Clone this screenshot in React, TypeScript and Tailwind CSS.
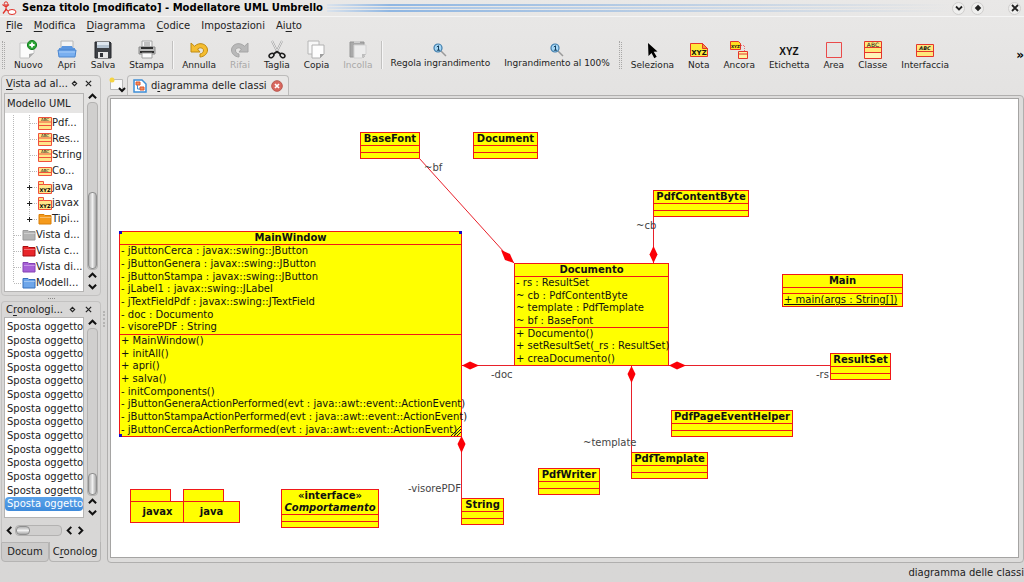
import { useState } from 'react';
import type { ReactNode } from 'react';
import clsx from 'clsx';

type IconName =
  | 'new' | 'open' | 'save' | 'print' | 'undo' | 'redo' | 'cut' | 'copy' | 'paste'
  | 'zoom' | 'select' | 'note' | 'anchor' | 'label' | 'box' | 'class' | 'interface';

type ToolItem = { label: string; icon: IconName; disabled?: boolean } | 'separator' | 'grip';

const MENUS = ['_File', '_Modifica', '_Diagramma', '_Codice', 'Impo_stazioni', 'Ai_uto'];

const TOOLS: ToolItem[] = [
  'grip',
  { label: 'Nuovo', icon: 'new' },
  { label: 'Apri', icon: 'open' },
  { label: 'Salva', icon: 'save' },
  { label: 'Stampa', icon: 'print' },
  'separator',
  { label: 'Annulla', icon: 'undo' },
  { label: 'Rifai', icon: 'redo', disabled: true },
  { label: 'Taglia', icon: 'cut' },
  { label: 'Copia', icon: 'copy' },
  { label: 'Incolla', icon: 'paste', disabled: true },
  'separator',
  { label: 'Regola ingrandimento', icon: 'zoom' },
  { label: 'Ingrandimento al 100%', icon: 'zoom' },
  'grip',
  { label: 'Seleziona', icon: 'select' },
  { label: 'Nota', icon: 'note' },
  { label: 'Ancora', icon: 'anchor' },
  { label: 'Etichetta', icon: 'label' },
  { label: 'Area', icon: 'box' },
  { label: 'Classe', icon: 'class' },
  { label: 'Interfaccia', icon: 'interface' },
];

type TreeIconName = 'class' | 'interface' | 'package' | 'orange' | 'gray' | 'red' | 'purple' | 'blue';

const TREE: { label: string; icon: TreeIconName; level: number; expandable?: boolean }[] = [
  { label: 'Pdf...', icon: 'class', level: 2 },
  { label: 'Res...', icon: 'class', level: 2 },
  { label: 'String', icon: 'class', level: 2 },
  { label: 'Co...', icon: 'interface', level: 2 },
  { label: 'java', icon: 'package', level: 2, expandable: true },
  { label: 'javax', icon: 'package', level: 2, expandable: true },
  { label: 'Tipi...', icon: 'orange', level: 2, expandable: true },
  { label: 'Vista d...', icon: 'gray', level: 1 },
  { label: 'Vista c...', icon: 'red', level: 1 },
  { label: 'Vista di...', icon: 'purple', level: 1 },
  { label: 'Modell...', icon: 'blue', level: 1 },
];

const HISTORY = Array.from({ length: 14 }, () => 'Sposta oggetto');

interface UmlClass {
  name: string;
  x: number;
  y: number;
  w: number;
  h: number;
  attributes?: string[];
  operations?: string[];
  stereotype?: string;
  selected?: boolean;
}

// Positions are relative to the top left corner of the canvas
const CLASSES: UmlClass[] = [
  { name: 'BaseFont', x: 249, y: 33, w: 60, h: 27 },
  { name: 'Document', x: 362, y: 33, w: 65, h: 27 },
  { name: 'PdfContentByte', x: 542, y: 91, w: 96, h: 27 },
  {
    name: 'MainWindow', x: 8, y: 132, w: 343, h: 206, selected: true,
    attributes: [
      '- jButtonCerca : javax::swing::JButton',
      '- jButtonGenera : javax::swing::JButton',
      '- jButtonStampa : javax::swing::JButton',
      '- jLabel1 : javax::swing::JLabel',
      '- jTextFieldPdf : javax::swing::JTextField',
      '- doc : Documento',
      '- visorePDF : String',
    ],
    operations: [
      '+ MainWindow()',
      '+ initAll()',
      '+ apri()',
      '+ salva()',
      '- initComponents()',
      '- jButtonGeneraActionPerformed(evt : java::awt::event::ActionEvent)',
      '- jButtonStampaActionPerformed(evt : java::awt::event::ActionEvent)',
      '- jButtonCercaActionPerformed(evt : java::awt::event::ActionEvent)',
    ],
  },
  {
    name: 'Documento', x: 403, y: 164, w: 155, h: 103,
    attributes: ['- rs : ResultSet', '~ cb : PdfContentByte', '~ template : PdfTemplate', '~ bf : BaseFont'],
    operations: ['+ Documento()', '+ setResultSet(_rs : ResultSet)', '+ creaDocumento()'],
  },
  { name: 'Main', x: 671, y: 175, w: 121, h: 33, attributes: [], operations: ['+ main(args : String[])'] },
  { name: 'ResultSet', x: 719, y: 254, w: 61, h: 27 },
  { name: 'PdfPageEventHelper', x: 560, y: 311, w: 122, h: 27 },
  { name: 'PdfTemplate', x: 520, y: 353, w: 77, h: 27 },
  { name: 'PdfWriter', x: 427, y: 369, w: 62, h: 27 },
  { name: 'String', x: 350, y: 399, w: 43, h: 27 },
  { name: 'Comportamento', x: 170, y: 390, w: 98, h: 39, stereotype: '«interface»' },
];

const PACKAGES = [
  { name: 'javax', x: 19, y: 390, w: 55 },
  { name: 'java', x: 72, y: 390, w: 57 },
];

const ROLES = [
  { text: '~bf', x: 313, y: 63 },
  { text: '~cb', x: 525, y: 121 },
  { text: '-doc', x: 380, y: 270 },
  { text: '-rs', x: 705, y: 270 },
  { text: '~template', x: 472, y: 338 },
  { text: '-visorePDF', x: 297, y: 384 },
];

function Mnemonic({ text }: { text: string }) {
  const i = text.indexOf('_');
  if (i < 0) return <>{text}</>;
  return (
    <>
      {text.slice(0, i)}
      <span className="underline underline-offset-2">{text[i + 1]}</span>
      {text.slice(i + 2)}
    </>
  );
}

function ToolIcon({ name }: { name: IconName }) {
  const icons: Record<IconName, ReactNode> = {
    new: (
      <>
        <path d="M2 3h14v10l-5 5H2z" fill="#fcfcfc" stroke="#c4c4c4" />
        <path d="M16 13l-5 5v-4z" fill="#a9a9a9" />
        <circle cx="14" cy="5" r="4.6" fill="#2aa434" stroke="#14801f" />
        <path d="M14 2.4v5.2M11.4 5h5.2" stroke="#fff" strokeWidth="1.8" />
      </>
    ),
    open: (
      <>
        <path d="M4 1h12v9H4z" fill="#f4f4f4" stroke="#b8b8b8" />
        <path d="M2 8h2l1-2h10l1 2h2v3H2z" fill="#5c97e0" />
        <path d="M1 10h18l-1 7H2z" fill="#79aff0" stroke="#4c86cf" />
        <path d="M2 12h16" stroke="#a9cdf8" />
      </>
    ),
    save: (
      <>
        <path d="M2 2h15l1 1v15H2z" fill="#3e4146" stroke="#26282c" />
        <path d="M4 2h12v6H4z" fill="#dfe7ef" />
        <path d="M4 5h12v3H4z" fill="#b6c4d2" />
        <path d="M5 12h10v6H5z" fill="#e6e6e6" />
        <path d="M7 13h3v4H7z" fill="#303338" />
      </>
    ),
    print: (
      <>
        <path d="M5 1h10v6H5z" fill="#f6f6f6" stroke="#a6a6a6" />
        <path d="M7 3h6M7 5h6" stroke="#8d8d8d" />
        <path d="M2 7h16v7H2z" fill="#b9b9b9" stroke="#8a8a8a" />
        <path d="M4 7h12v2H4zM3 11h14v2H3z" fill="#2f2f2f" />
        <path d="M5 13h10v5H5z" fill="#fafafa" stroke="#a0a0a0" />
      </>
    ),
    undo: (
      <path d="M2 3v9h9L8.500 9c2-1.800 5-1.500 5.800.5.800 2.200-.8 4-3.300 4.500v3c4.500-.3 7.500-3.500 7.500-7 0-5.500-7.500-9-13-3.800z" fill="#f5bd30" stroke="#c08c12" />
    ),
    redo: (
      <path d="M18 3v9H9l2.500-3c-2-1.800-5-1.500-5.800.5-.8 2.200.8 4 3.300 4.500v3C4.500 16.700 1.500 13.500 1.500 10c0-5.500 7.500-9 13-3.800z" fill="#b9b9b9" stroke="#a5a5a5" />
    ),
    cut: (
      <>
        <path d="M5 1l6 12M15 1L9 13" stroke="#9a9a9a" strokeWidth="2" />
        <path d="M5 1l5.500 11M15 1L9.500 12" stroke="#f4f4f4" />
        <ellipse cx="4.500" cy="15.500" rx="2.600" ry="1.900" fill="none" stroke="#1c1c1c" strokeWidth="1.500" transform="rotate(-35 4.500 15.500)" />
        <ellipse cx="15.500" cy="15.500" rx="2.600" ry="1.900" fill="none" stroke="#1c1c1c" strokeWidth="1.500" transform="rotate(35 15.500 15.500)" />
        <path d="M6.500 14l3.500-2.500 3.500 2.500" fill="none" stroke="#1c1c1c" strokeWidth="1.800" />
      </>
    ),
    copy: (
      <>
        <path d="M2 1h11v13H2z" fill="#f7f7f7" stroke="#b6b6b6" />
        <path d="M6 5h12v9l-4 4H6z" fill="#fdfdfd" stroke="#b0b0b0" />
        <path d="M18 14h-4v4z" fill="#9f9f9f" />
      </>
    ),
    paste: (
      <>
        <path d="M2 2h14v15H2z" fill="#a9a9a9" stroke="#969696" />
        <path d="M6 1h6v2H6z" fill="#cfcfcf" />
        <path d="M6 5h12v9l-4 4H6z" fill="#ececec" stroke="#d2d2d2" />
        <path d="M18 14h-4v4z" fill="#bdbdbd" />
      </>
    ),
    zoom: (
      <>
        <path d="M9 9l5 5" stroke="#9a9a9a" strokeWidth="1.500" />
        <circle cx="6" cy="6" r="4" fill="#a8d8f6" stroke="#3f7cab" strokeWidth="1.200" />
        <path d="M4.800 5l1.700-1.200v4.400M4.800 8.200H8" fill="none" stroke="#16405f" />
      </>
    ),
    select: <path d="M6 3l9.500 8.500-3.800.3 3 5-2.400 1.400-2.800-5.200L6.500 16z" fill="#000" />,
    note: (
      <>
        <path d="M1.500 3.500h12l5 5v8h-17z" fill="#ffe93b" stroke="#e5352c" />
        <path d="M13.500 3.500v5h5z" fill="#f09b3a" stroke="#e5352c" />
        <text x="10" y="15" textAnchor="middle" className="text-[7px] font-bold">XYZ</text>
      </>
    ),
    anchor: (
      <>
        <path d="M1.500 1.500h8l2 2v6h-10z" fill="#ffe01e" stroke="#e5352c" />
        <text x="2" y="8" className="text-[4px] font-bold">XYZ</text>
        <path d="M12 5.500h3.500V11" fill="none" stroke="#f07070" strokeDasharray="1 1" />
        <path d="M9.500 11.500h9v7h-9z" fill="#fff3a0" stroke="#e5352c" />
        <path d="M9.500 14h9" stroke="#e5352c" />
      </>
    ),
    label: (
      <text x="10" y="15" textAnchor="middle" className="font-['Liberation_Sans'] text-[10px] font-bold">
        XYZ
      </text>
    ),
    box: <path d="M2.500 2.500h15v15h-15z" fill="none" stroke="#ea4a4a" />,
    class: (
      <>
        <path d="M1.500 1.500h17v17h-17z" fill="#ffe77a" stroke="#e5352c" />
        <path d="M2 13h16v5H2z" fill="#fff3b8" />
        <path d="M1.500 7.500h17M1.500 12.500h17" stroke="#e5352c" />
        <text x="10" y="7" textAnchor="middle" className="text-[6px]">ABC</text>
      </>
    ),
    interface: (
      <>
        <path d="M1.500 4.500h17v12h-17z" fill="#ffe77a" stroke="#e5352c" />
        <path d="M1.500 11.500h17" stroke="#e5352c" />
        <text x="10" y="10" textAnchor="middle" className="text-[5px] font-bold italic">ABC</text>
      </>
    ),
  };
  const small = name === 'zoom';
  return (
    <svg className={small ? 'h-4 w-4' : 'h-5 w-5'} viewBox={small ? '0 0 16 16' : '0 0 20 20'} fill="#111" aria-hidden="true">
      {icons[name]}
    </svg>
  );
}

function TreeIcon({ name }: { name: TreeIconName }) {
  const folders: Record<string, [string, string]> = {
    orange: ['#f59a1b', '#d97f08'],
    gray: ['#b4b4b4', '#9a9a9a'],
    red: ['#e8262a', '#a80d10'],
    purple: ['#a660d6', '#8542b4'],
    blue: ['#6ea6ea', '#3670bd'],
  };
  const folder = folders[name];
  return (
    <svg className="h-[14px] w-[14px] shrink-0" viewBox="0 0 14 14" aria-hidden="true">
      {folder && (
        <>
          <path d="M1 2.500h5l1 1h6v8.500H1z" fill={folder[0]} stroke={folder[1]} />
          <path d="M2 5.500h11" stroke="#fff" strokeOpacity=".35" />
        </>
      )}
      {name === 'class' && (
        <>
          <path d="M.5 1.500h13v12H.5z" fill="#ffe58a" stroke="#f0503c" />
          <path d="M.5 6h13M.5 9.500h13" stroke="#f0503c" />
          <text x="7" y="5" textAnchor="middle" className="text-[4px]">ABC</text>
        </>
      )}
      {name === 'interface' && (
        <>
          <path d="M.5 3.500h13v8H.5z" fill="#ffe58a" stroke="#f0503c" />
          <path d="M.5 8.500h13" stroke="#f0503c" />
          <text x="7" y="8" textAnchor="middle" className="text-[4px] italic">ABC</text>
        </>
      )}
      {name === 'package' && (
        <>
          <path d="M.5 1.500h5v3h8v9H.5z" fill="#ffe58a" stroke="#f0503c" />
          <path d="M.5 4.500h5" stroke="#f0503c" />
          <text x="7" y="12" textAnchor="middle" className="text-[5px] font-bold">XYZ</text>
        </>
      )}
    </svg>
  );
}

function Guide({ branch, last, expandable }: { branch?: boolean; last?: boolean; expandable?: boolean }) {
  return (
    <svg className="h-4 w-4 shrink-0" viewBox="0 0 16 16" aria-hidden="true">
      <path d={last ? 'M7.500 0v8' : 'M7.500 0v16'} stroke="#b9b9b9" strokeDasharray="1 1" />
      {branch && <path d="M8 8.500h8" stroke="#b9b9b9" strokeDasharray="1 1" />}
      {expandable && <path d="M7.500 6v5M5 8.500h5" stroke="#222" />}
    </svg>
  );
}

function Chevron({ dir }: { dir: 'up' | 'down' | 'left' | 'right' }) {
  const paths = { up: 'M1 7l4-4 4 4', down: 'M1 3l4 4 4-4', left: 'M7 1L3 5l4 4', right: 'M3 1l4 4-4 4' };
  return (
    <svg className="h-[9px] w-[9px]" viewBox="0 0 10 10" fill="none" aria-hidden="true">
      <path d={paths[dir]} stroke="#111" strokeWidth="2.200" />
    </svg>
  );
}

function ScrollButton({ dir }: { dir: 'up' | 'down' | 'left' | 'right' }) {
  return (
    <button type="button" aria-label={`scroll ${dir}`} className="flex h-[11px] w-[11px] items-center justify-center">
      <Chevron dir={dir} />
    </button>
  );
}

function VerticalScroll({ thumb }: { thumb: string }) {
  return (
    <div className="flex w-[11px] shrink-0 flex-col items-center">
      <ScrollButton dir="up" />
      <div className="flex w-[11px] flex-1 flex-col justify-end rounded-[4px] border border-[#b3b2b1] bg-[#d0cfce]">
        <div className={clsx('rounded-[4px] border border-[#8f8f8f] bg-linear-to-r from-[#b5b5b5] via-[#f0f0f0] to-[#a8a8a8]', thumb)} />
      </div>
      <ScrollButton dir="up" />
      <ScrollButton dir="down" />
    </div>
  );
}

function DockHeader({ title }: { title: string }) {
  return (
    <div className="flex h-[15px] items-center pl-1">
      <h2 className="flex-1 whitespace-nowrap">
        <Mnemonic text={title} />
      </h2>
      <button type="button" aria-label="Sgancia" className="flex h-3 w-4 items-center justify-center">
        <svg className="h-[7px] w-[7px]" viewBox="0 0 8 8" aria-hidden="true">
          <path d="M4 1.500L6.500 4 4 6.500 1.500 4z" fill="none" stroke="#222" strokeWidth="1.300" />
        </svg>
      </button>
      <button type="button" aria-label="Chiudi" className="mr-1 flex h-3 w-4 items-center justify-center">
        <svg className="h-[7px] w-[7px]" viewBox="0 0 8 8" aria-hidden="true">
          <path d="M1 1l6 6M7 1L1 7" stroke="#222" strokeWidth="1.400" />
        </svg>
      </button>
    </div>
  );
}

function WindowButton({ label, children }: { label: string; children: ReactNode }) {
  return (
    <button type="button" aria-label={label} className="flex h-[13px] w-[13px] items-center justify-center rounded-full border border-[#cfcecd] bg-[#efefee]">
      <svg className="h-2 w-2" viewBox="0 0 8 8" fill="none" stroke="#222" strokeWidth="1.800" aria-hidden="true">
        {children}
      </svg>
    </button>
  );
}

function TitleBar() {
  return (
    <header className="flex h-4 shrink-0 items-center">
      <svg className="mx-px h-4 w-4 shrink-0" viewBox="0 0 16 16" fill="none" stroke="#e2322a" aria-hidden="true">
        <circle cx="5" cy="3.500" r="1.700" />
        <path d="M5 5.500v4M1.500 4.500L5 7l3-2.500M5 9.500l-3 4M5 9.500l3 2" strokeWidth="1.300" />
        <ellipse cx="11" cy="12" rx="4" ry="2.500" fill="#fff" />
      </svg>
      <h1 className="ml-1 whitespace-nowrap font-bold text-black">Senza titolo [modificato] - Modellatore UML Umbrello</h1>
      <div className="ml-1 flex flex-1 flex-col gap-px">
        <div className="h-[2px] bg-linear-to-r from-[#dbe3ec] via-[#8fb6e2] via-10% to-transparent" />
        <div className="h-[2px] bg-linear-to-r from-[#dbe3ec] via-[#a6c5e8] via-10% to-transparent" />
        <div className="h-[2px] bg-linear-to-r from-[#dbe3ec] via-[#8fb6e2] via-10% to-transparent" />
      </div>
      <div className="flex gap-[6px] pr-6">
        <WindowButton label="Minimizza">
          <path d="M1 2.500l3 3 3-3" />
        </WindowButton>
        <WindowButton label="Massimizza">
          <path d="M4 2L6 4 4 6 2 4z" fill="#222" />
        </WindowButton>
      </div>
      <div className="pr-[3px]">
        <WindowButton label="Chiudi">
          <path d="M1 1l6 6M7 1L1 7" />
        </WindowButton>
      </div>
    </header>
  );
}

function ToolBar() {
  return (
    <div role="toolbar" className="flex h-10 shrink-0 items-center text-[9px] leading-[10px]">
      {TOOLS.map((item, i) => {
        if (item === 'separator') {
          return <div key={i} className="mx-px h-7 w-[2px] border-l border-[#c2c1c0] bg-[#f6f6f6]" />;
        }
        if (item === 'grip') {
          return (
            <div key={i} className="flex h-7 w-[7px] justify-center gap-px">
              <div className="border-l border-dotted border-[#a9a8a7]" />
              <div className="mt-px border-l border-dotted border-[#a9a8a7]" />
            </div>
          );
        }
        return (
          <button
            key={i}
            type="button"
            disabled={item.disabled}
            className={clsx('flex flex-col items-center whitespace-nowrap px-[7px]', item.disabled && 'text-[#a9a8a7]')}
          >
            <ToolIcon name={item.icon} />
            {item.label}
          </button>
        );
      })}
      <button type="button" className="ml-auto text-xs font-bold text-black" aria-label="Altri strumenti">
        »
      </button>
    </div>
  );
}

function TreeDock() {
  return (
    <section className="flex flex-[218] flex-col rounded-sm border border-[#c3c2c1] pb-[3px]">
      <DockHeader title="_Vista ad al..." />
      <div className="mx-[2px] flex min-h-0 flex-1 justify-between">
        <div className="mt-[2px] flex w-20 flex-col border border-[#b5b4b3] bg-white">
          <div className="flex h-[19px] shrink-0 items-center bg-[#e6e5e4] pl-[2px] whitespace-nowrap">Modello UML</div>
          <ul className="flex min-h-0 flex-1 flex-col overflow-hidden pt-[2px]">
            {TREE.map((node, i) => (
              <li key={node.label} className="flex h-4 shrink-0 items-center pl-px whitespace-nowrap">
                {node.level === 2 && <Guide />}
                <Guide branch last={i === TREE.length - 1 || i === 6} expandable={node.expandable} />
                <TreeIcon name={node.icon} />
                {node.label}
              </li>
            ))}
          </ul>
        </div>
        <VerticalScroll thumb="h-[77px]" />
      </div>
    </section>
  );
}

function HistoryDock() {
  const [current, setCurrent] = useState(HISTORY.length - 1);
  return (
    <section className="flex flex-[242] flex-col rounded-t-sm border border-b-0 border-[#c3c2c1]">
      <DockHeader title="C_ronologi..." />
      <div className="mx-[2px] flex min-h-0 flex-1 justify-between">
        <ul className="flex w-20 flex-col border border-[#b5b4b3] bg-white pt-[2px] pb-[6px]">
          {HISTORY.map((entry, i) => (
            <li key={i} className="flex flex-1">
              <button
                type="button"
                onClick={() => setCurrent(i)}
                className={clsx(
                  'flex flex-1 items-center pl-[2px] leading-none whitespace-nowrap',
                  i === current && 'rounded-sm bg-linear-to-b from-[#5ba3ea] to-[#3f8bdb] text-white',
                )}
              >
                {entry}
              </button>
            </li>
          ))}
        </ul>
        <VerticalScroll thumb="h-[22px]" />
      </div>
      <div className="mx-[2px] flex h-6 items-center">
        <ScrollButton dir="left" />
        <div className="mr-[2px] h-[11px] w-[47px] rounded-[4px] border border-[#b3b2b1] bg-[#d0cfce]">
          <div className="h-full w-[14px] rounded-[4px] border border-[#8f8f8f] bg-linear-to-b from-[#b5b5b5] via-[#f0f0f0] to-[#a8a8a8]" />
        </div>
        <ScrollButton dir="left" />
        <ScrollButton dir="right" />
      </div>
    </section>
  );
}

function DockTabs() {
  return (
    <div role="tablist" className="flex h-5 shrink-0">
      <button type="button" role="tab" aria-selected="false" className="w-12 shrink-0 rounded-b-sm border border-[#b5b4b3] bg-[#cccbca] whitespace-nowrap">
        Docum
      </button>
      <button type="button" role="tab" aria-selected="true" className="flex-1 rounded-b-sm border border-t-0 border-[#b5b4b3] whitespace-nowrap">
        <Mnemonic text="C_ronolog" />
      </button>
    </div>
  );
}

function Members({ lines, isStatic }: { lines: string[]; isStatic?: boolean }) {
  return (
    <ul
      className={clsx('flex flex-col border-t border-[#f01818] pl-px', lines.length === 0 && 'h-[6px] shrink-0')}
      style={{ flexGrow: lines.length }}
    >
      {lines.map((line) => (
        <li key={line} className={clsx('flex flex-1 items-center leading-none', isStatic && 'underline')}>
          {line}
        </li>
      ))}
    </ul>
  );
}

function ClassBox({ item }: { item: UmlClass }) {
  const { attributes, operations } = item;
  return (
    <div
      className="absolute flex flex-col border border-[#f01818] bg-[#ffff00] whitespace-nowrap text-[#111]"
      style={{ left: item.x, top: item.y, width: item.w, height: item.h }}
    >
      {item.stereotype && <div className="flex h-3 shrink-0 items-center justify-center font-bold">{item.stereotype}</div>}
      <div className={clsx('flex h-3 shrink-0 items-center justify-center font-bold', item.stereotype && 'italic')}>{item.name}</div>
      {attributes && operations ? (
        <>
          <Members lines={attributes} />
          <Members lines={operations} isStatic={item.name === 'Main'} />
        </>
      ) : (
        <>
          <div className="flex-1 border-t border-[#f01818]" />
          <div className="flex-1 border-t border-[#f01818]" />
        </>
      )}
      {item.selected && (
        <>
          <span className="absolute -top-px -left-px h-[3px] w-[3px] bg-[#1408c8]" />
          <span className="absolute -top-px -right-px h-[3px] w-[3px] bg-[#1408c8]" />
          <span className="absolute -bottom-px -left-px h-[3px] w-[3px] bg-[#1408c8]" />
          <svg className="absolute right-0 bottom-0 h-[10px] w-[10px]" viewBox="0 0 10 10" aria-hidden="true">
            <path d="M0 10L10 0M3 10l7-7M6 10l4-4" stroke="#222" />
          </svg>
        </>
      )}
    </div>
  );
}

function Canvas() {
  return (
    <div className="relative min-h-0 flex-1 overflow-hidden border border-[#a5a4a3] bg-white">
      {CLASSES.map((item) => (
        <ClassBox key={item.name} item={item} />
      ))}
      {PACKAGES.map((pkg) => (
        <div key={pkg.name} className="absolute flex flex-col items-start font-bold text-[#111]" style={{ left: pkg.x, top: pkg.y, width: pkg.w }}>
          <div className="h-3 w-[41px] border border-b-0 border-[#f01818] bg-[#ffff00]" />
          <div className="flex h-[22px] w-full items-center justify-center border border-[#f01818] bg-[#ffff00]">{pkg.name}</div>
        </div>
      ))}
      <svg className="absolute inset-0 h-full w-full" aria-hidden="true">
        <g stroke="#e8202a" fill="none">
          <path d="M308 59l95 105" />
          <path d="M542.500 117v47" />
          <path d="M350 266.500h53M558 266.500h161" />
          <path d="M520.500 267v86" />
          <path d="M350.500 337v62" />
        </g>
        <g fill="#fb0007">
          <path d="M403 164l-9-3-4-10 9 4z" />
          <path d="M542.500 147l4 8.500-4 8.500-4-8.500z" />
          <path d="M351 266.500l8-4 9 4-9 4z" />
          <path d="M558 266.500l8-4 9 4-9 4z" />
          <path d="M520.500 267l4 8-4 9-4-9z" />
          <path d="M350.500 337l4 8-4 9-4-9z" />
        </g>
      </svg>
      {ROLES.map((role) => (
        <span key={role.text} className="absolute whitespace-nowrap text-[#444]" style={{ left: role.x, top: role.y }}>
          {role.text}
        </span>
      ))}
    </div>
  );
}

function DiagramTab() {
  return (
    <div className="flex h-5 shrink-0 items-end">
      <button type="button" aria-label="Nuovo diagramma" className="flex h-5 w-5 items-center justify-center">
        <svg className="h-[18px] w-[18px]" viewBox="0 0 18 18" aria-hidden="true">
          <path d="M2.500 3.500h12v10h-12z" fill="#fafafa" stroke="#b9b9b9" />
          <circle cx="4" cy="4" r="2.500" fill="#f5d442" />
          <path d="M11 12l3 3 3-3" fill="none" stroke="#111" strokeWidth="2" />
        </svg>
      </button>
      <div className="flex h-5 items-center rounded-t-sm border border-b-0 border-[#bdbcbb] bg-[#e8e7e6] px-[5px]">
        <svg className="mr-1 h-[14px] w-[14px]" viewBox="0 0 14 14" aria-hidden="true">
          <path d="M1 1h8l4 4v8H1z" fill="#fff" stroke="#3f8fd6" strokeWidth="1.500" />
          <path d="M3 3h4v3H3zM7 8h4v3H7z" fill="#f0905c" stroke="#e0552c" />
          <path d="M4.500 6v4H7" fill="none" stroke="#3f8fd6" />
        </svg>
        <button type="button" role="tab" aria-selected="true" className="whitespace-nowrap">
          <Mnemonic text="d_iagramma delle classi" />
        </button>
        <button type="button" aria-label="Chiudi scheda" className="ml-1">
          <svg className="h-3 w-3" viewBox="0 0 12 12" aria-hidden="true">
            <circle cx="6" cy="6" r="5.300" fill="#d9675f" stroke="#b9584f" />
            <path d="M4 4l4 4M8 4L4 8" stroke="#fff" strokeWidth="1.700" />
          </svg>
        </button>
      </div>
    </div>
  );
}

export default function App() {
  return (
    <div className="flex h-screen min-h-[400px] w-full flex-col overflow-hidden bg-[#d8d7d6] bg-linear-to-b from-[#e9e8e7] to-[#d8d7d6] to-50% font-['DejaVu_Sans',sans-serif] text-[10px] leading-3 text-[#222]">
      <TitleBar />
      <nav className="flex h-[19px] shrink-0 items-center gap-[11px] border-t border-[#f5f5f5] pl-[6px]">
        {MENUS.map((menu) => (
          <button key={menu} type="button" className="whitespace-nowrap">
            <Mnemonic text={menu} />
          </button>
        ))}
      </nav>
      <ToolBar />
      <div className="flex min-h-0 flex-1">
        <aside className="flex w-[101px] shrink-0 flex-col pb-px pl-px">
          <TreeDock />
          <div className="mx-auto my-[2px] h-px w-[7px] border-t border-dotted border-[#8b8a89]" />
          <HistoryDock />
          <DockTabs />
        </aside>
        <div className="flex w-[6px] shrink-0 items-center justify-center">
          <div className="h-4 border-l-2 border-dotted border-[#b5b4b3]" />
        </div>
        <main className="flex min-w-0 flex-1 flex-col">
          <DiagramTab />
          <div className="flex min-h-0 flex-1 flex-col rounded-sm border border-[#b0afae] bg-[#dddcdb] p-[2px] pr-1 pb-1">
            <Canvas />
          </div>
        </main>
      </div>
      <footer className="flex h-[19px] shrink-0 items-center justify-end whitespace-nowrap">diagramma delle classi</footer>
    </div>
  );
}
